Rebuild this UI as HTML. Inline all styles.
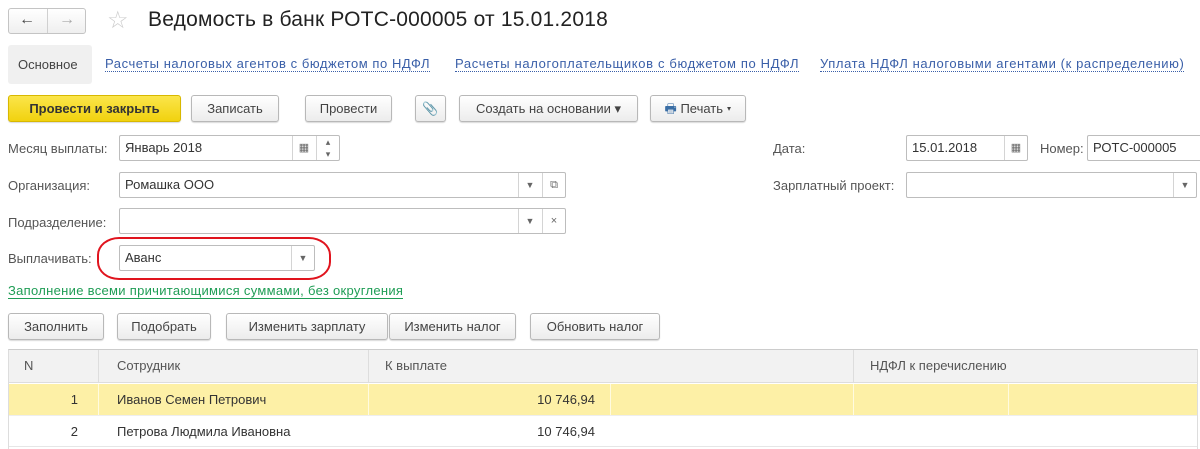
<!DOCTYPE html>
<html><head><meta charset="utf-8"><style>
*{box-sizing:border-box;margin:0;padding:0}
body{width:1200px;height:449px;overflow:hidden;background:#fff;font-family:"Liberation Sans",Arial,sans-serif;font-size:13px;color:#333;position:relative}
.a{position:absolute;white-space:nowrap}
.btn{position:absolute;height:27px;border:1px solid #b8b8b8;border-radius:3px;background:linear-gradient(#fff,#ececec);box-shadow:0 1px 1px rgba(0,0,0,.15);text-align:center;line-height:25px;color:#444;font-size:13px;white-space:nowrap}
.inp{position:absolute;height:26px;border:1px solid #bdbdbd;border-radius:2px;background:#fff;line-height:24px;padding-left:5px;color:#333;font-size:13px;white-space:nowrap}
.sb{position:absolute;top:0;bottom:0;width:23px;border-left:1px solid #d4d4d4;text-align:center;color:#666;font-size:9px;line-height:24px}
.lbl{position:absolute;color:#555;font-size:13px;white-space:nowrap}
.lnk{position:absolute;color:#3a5fa8;font-size:13px;border-bottom:1px dotted #3a5fa8;line-height:15px;white-space:nowrap}
.c{position:absolute;top:0;bottom:0}
</style></head><body>
<div class="a" style="left:8px;top:8px;width:78px;height:26px;border:1px solid #c4c4c4;border-radius:3px;background:linear-gradient(#fff,#efefef)">
<div class="a" style="left:38px;top:0;bottom:0;border-left:1px solid #d0d0d0"></div>
<div class="a" style="left:10px;top:2px;font-size:16px;color:#444">&#8592;</div>
<div class="a" style="left:50px;top:2px;font-size:16px;color:#aaa">&#8594;</div>
</div>
<div class="a" style="left:107px;top:6px;font-size:24px;color:#ccc">&#9734;</div>
<div class="a" style="left:148px;top:8px;font-size:21px;color:#222;letter-spacing:.2px">Ведомость в банк РОТС-000005 от 15.01.2018</div>

<div class="a" style="left:8px;top:45px;width:84px;height:39px;background:#f0f0f0;border-radius:3px"></div>
<div class="a" style="left:18px;top:57px;color:#444">Основное</div>
<div class="lnk" style="left:105px;top:56px;letter-spacing:.55px">Расчеты налоговых агентов с бюджетом по НДФЛ</div>
<div class="lnk" style="left:455px;top:56px;letter-spacing:.65px">Расчеты налогоплательщиков с бюджетом по НДФЛ</div>
<div class="lnk" style="left:820px;top:56px;letter-spacing:.6px">Уплата НДФЛ налоговыми агентами (к распределению)</div>

<div class="btn" style="left:8px;top:95px;width:173px;background:linear-gradient(#fbe54a,#f1d20f);border-color:#d8b800;color:#333;font-weight:bold">Провести и закрыть</div>
<div class="btn" style="left:191px;top:95px;width:88px">Записать</div>
<div class="btn" style="left:305px;top:95px;width:87px">Провести</div>
<div class="btn" style="left:415px;top:95px;width:31px;color:#888">&#128206;</div>
<div class="btn" style="left:459px;top:95px;width:179px">Создать на основании &#9662;</div>
<div class="btn" style="left:650px;top:95px;width:96px"><span style="color:#3a6ea5">&#128438;</span> Печать &#9662;</div>

<div class="lbl" style="left:8px;top:141px">Месяц выплаты:</div>
<div class="inp" style="left:119px;top:135px;width:221px">Январь 2018<div class="sb" style="right:24px;font-size:11px">&#9638;</div><div class="sb" style="right:0;line-height:12px">&#9652;<br>&#9662;</div></div>
<div class="lbl" style="left:773px;top:141px">Дата:</div>
<div class="inp" style="left:906px;top:135px;width:122px">15.01.2018<div class="sb" style="right:0;font-size:11px">&#9638;</div></div>
<div class="lbl" style="left:1040px;top:141px">Номер:</div>
<div class="inp" style="left:1087px;top:135px;width:120px">РОТС-000005</div>

<div class="lbl" style="left:8px;top:178px">Организация:</div>
<div class="inp" style="left:119px;top:172px;width:447px">Ромашка ООО<div class="sb" style="right:24px">&#9660;</div><div class="sb" style="right:0;font-size:11px">&#10697;</div></div>
<div class="lbl" style="left:773px;top:178px">Зарплатный проект:</div>
<div class="inp" style="left:906px;top:172px;width:291px"><div class="sb" style="right:0">&#9660;</div></div>

<div class="lbl" style="left:8px;top:215px">Подразделение:</div>
<div class="inp" style="left:119px;top:208px;width:447px"><div class="sb" style="right:24px">&#9660;</div><div class="sb" style="right:0;font-size:11px">&#215;</div></div>

<div class="lbl" style="left:8px;top:251px">Выплачивать:</div>
<div class="inp" style="left:119px;top:245px;width:196px">Аванс<div class="sb" style="right:0">&#9660;</div></div>
<div class="a" style="left:97px;top:237px;width:234px;height:43px;border:2px solid #e0141e;border-radius:22px/18px"></div>

<div class="a" style="left:8px;top:283px;color:#1f9d55;border-bottom:1px solid #1f9d55;line-height:15px;letter-spacing:.3px">Заполнение всеми причитающимися суммами, без округления</div>

<div class="btn" style="left:8px;top:313px;width:96px">Заполнить</div>
<div class="btn" style="left:117px;top:313px;width:94px">Подобрать</div>
<div class="btn" style="left:226px;top:313px;width:162px">Изменить зарплату</div>
<div class="btn" style="left:389px;top:313px;width:127px">Изменить налог</div>
<div class="btn" style="left:530px;top:313px;width:130px">Обновить налог</div>

<div class="a" style="left:8px;top:349px;width:1190px;height:100px;border-top:1px solid #ccc;border-left:1px solid #ddd;border-right:1px solid #ddd"></div>
<div class="a" style="left:9px;top:350px;width:1188px;height:33px;background:#f2f2f2;border-bottom:1px solid #ddd;color:#555">
<div class="c" style="left:15px;line-height:32px">N</div>
<div class="c" style="left:89px;border-left:1px solid #ddd;padding-left:18px;line-height:32px">Сотрудник</div>
<div class="c" style="left:359px;border-left:1px solid #ddd;padding-left:16px;line-height:32px">К выплате</div>
<div class="c" style="left:844px;border-left:1px solid #ddd;padding-left:16px;line-height:32px">НДФЛ к перечислению</div>
</div>
<div class="a" style="left:9px;top:384px;width:1188px;height:31px;background:#fdf0a6;line-height:31px;color:#333">
<div class="c" style="left:0;width:89px;text-align:right;padding-right:20px">1</div>
<div class="c" style="left:89px;border-left:1px solid #fffbe0;padding-left:18px">Иванов Семен Петрович</div>
<div class="c" style="left:359px;width:242px;border-left:1px solid #fffbe0;text-align:right;padding-right:15px">10 746,94</div>
<div class="c" style="left:601px;border-left:1px solid #fffbe0"></div>
<div class="c" style="left:844px;border-left:1px solid #fffbe0"></div>
<div class="c" style="left:999px;border-left:1px solid #fffbe0"></div>
</div>
<div class="a" style="left:9px;top:415px;width:1188px;height:32px;line-height:32px;border-top:1px solid #eee;border-bottom:1px solid #e6e6e6;color:#333">
<div class="c" style="left:0;width:89px;text-align:right;padding-right:20px">2</div>
<div class="c" style="left:89px;padding-left:19px">Петрова Людмила Ивановна</div>
<div class="c" style="left:359px;width:242px;text-align:right;padding-right:15px">10 746,94</div>
</div>
</body></html>
